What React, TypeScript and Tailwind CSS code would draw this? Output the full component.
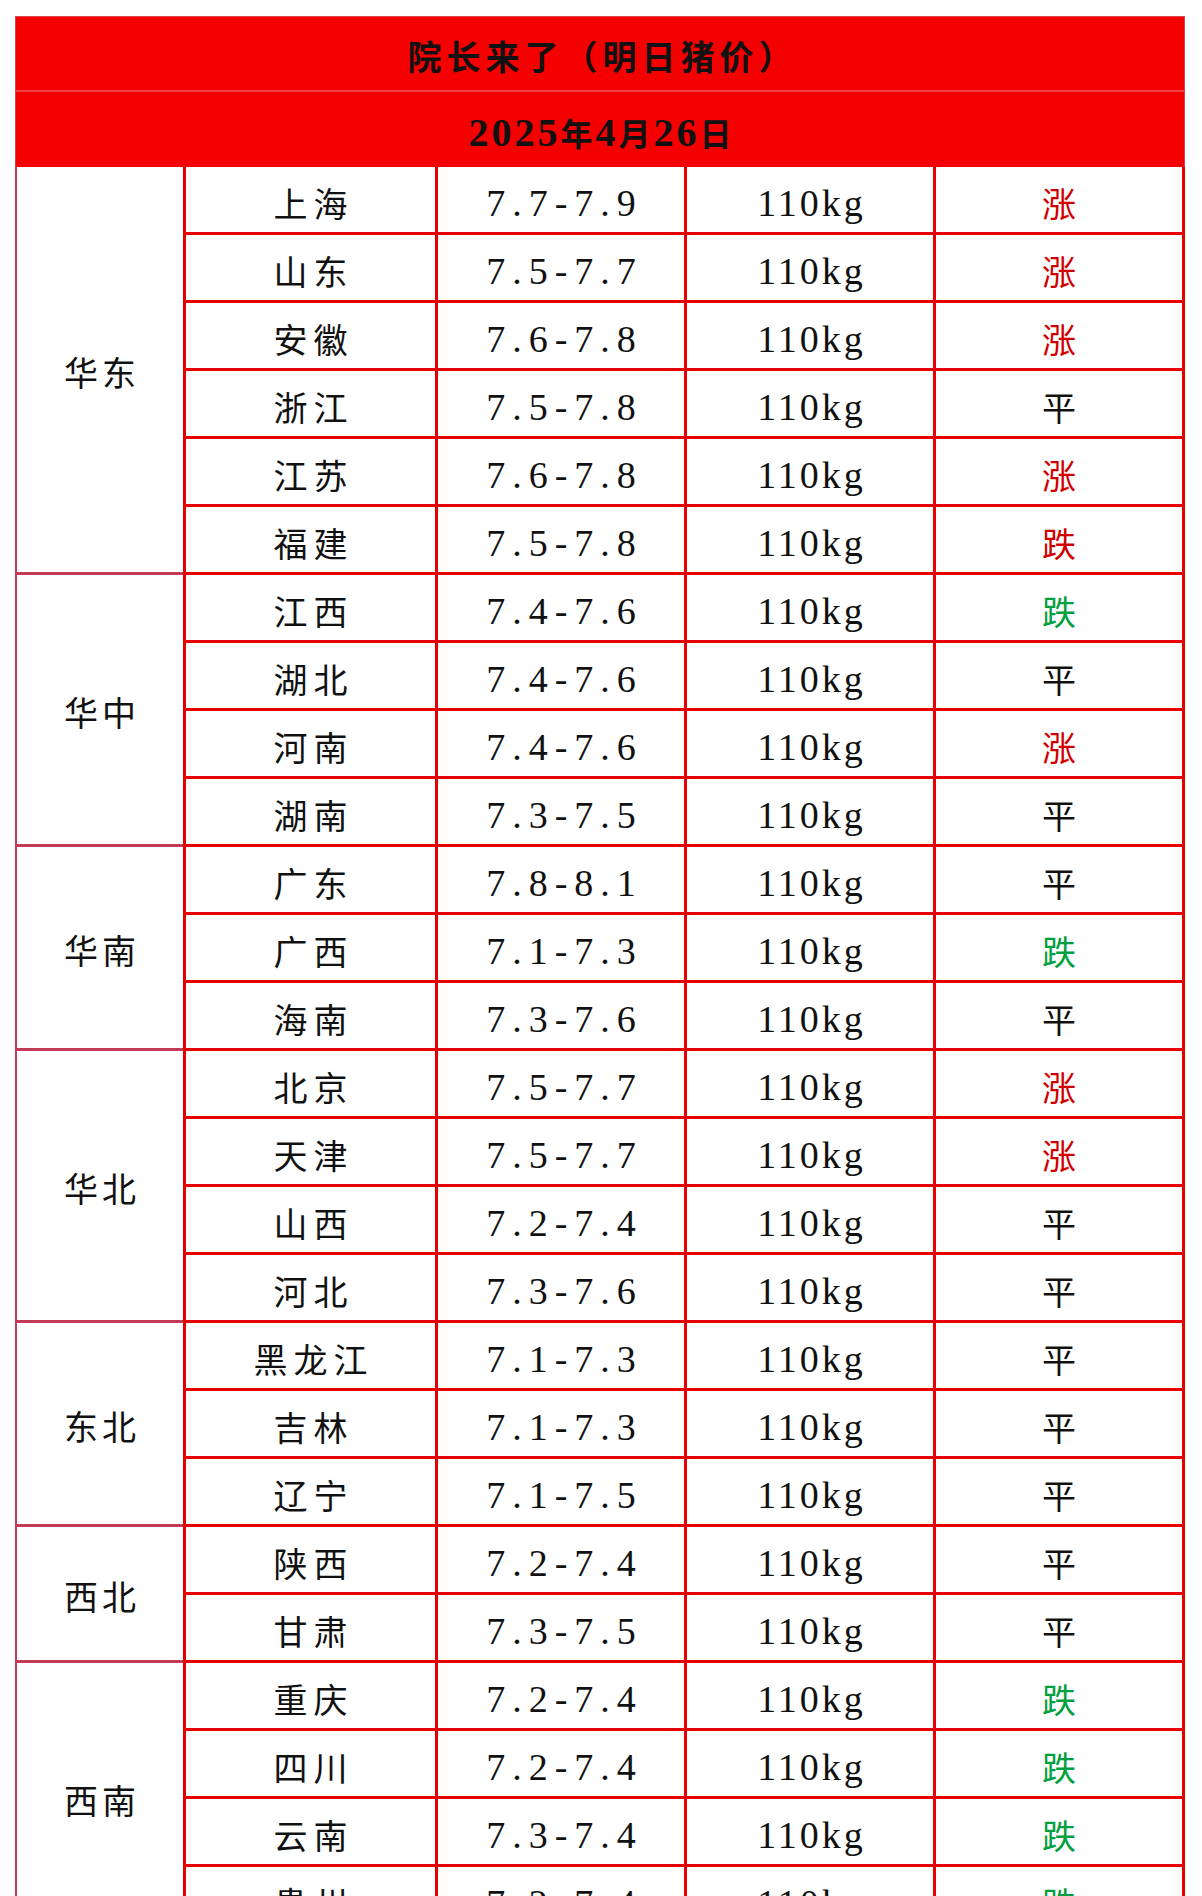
type Trend = 'up' | 'flat' | 'down' | 'downRed';

type Row = [string, string, Trend];

const regions: { name: string; rows: Row[] }[] = [
  {
    name: '华东',
    rows: [
      ['上海', '7.7-7.9', 'up'],
      ['山东', '7.5-7.7', 'up'],
      ['安徽', '7.6-7.8', 'up'],
      ['浙江', '7.5-7.8', 'flat'],
      ['江苏', '7.6-7.8', 'up'],
      ['福建', '7.5-7.8', 'downRed'],
    ],
  },
  {
    name: '华中',
    rows: [
      ['江西', '7.4-7.6', 'down'],
      ['湖北', '7.4-7.6', 'flat'],
      ['河南', '7.4-7.6', 'up'],
      ['湖南', '7.3-7.5', 'flat'],
    ],
  },
  {
    name: '华南',
    rows: [
      ['广东', '7.8-8.1', 'flat'],
      ['广西', '7.1-7.3', 'down'],
      ['海南', '7.3-7.6', 'flat'],
    ],
  },
  {
    name: '华北',
    rows: [
      ['北京', '7.5-7.7', 'up'],
      ['天津', '7.5-7.7', 'up'],
      ['山西', '7.2-7.4', 'flat'],
      ['河北', '7.3-7.6', 'flat'],
    ],
  },
  {
    name: '东北',
    rows: [
      ['黑龙江', '7.1-7.3', 'flat'],
      ['吉林', '7.1-7.3', 'flat'],
      ['辽宁', '7.1-7.5', 'flat'],
    ],
  },
  {
    name: '西北',
    rows: [
      ['陕西', '7.2-7.4', 'flat'],
      ['甘肃', '7.3-7.5', 'flat'],
    ],
  },
  {
    name: '西南',
    rows: [
      ['重庆', '7.2-7.4', 'down'],
      ['四川', '7.2-7.4', 'down'],
      ['云南', '7.3-7.4', 'down'],
      ['贵州', '7.2-7.4', 'down'],
    ],
  },
];

const trendText: Record<Trend, string> = { up: '涨', flat: '平', down: '跌', downRed: '跌' };
const trendColor: Record<Trend, string> = {
  up: 'text-[#d10000]',
  flat: 'text-[#111111]',
  down: 'text-[#00a040]',
  downRed: 'text-[#d10000]',
};

const cjk = "font-['Noto_Sans_CJK_SC',sans-serif]";
const serif = "font-['Liberation_Serif','Noto_Sans_CJK_SC',serif]";

function DataRow({ row }: { row: Row }) {
  const [city, price, trend] = row;
  return (
    <div className="grid grid-cols-4 h-[68px] border-b-[3px] border-[#e60000] text-[#111111]">
      <div className={`flex items-center justify-center pt-[7px] pl-[6px] text-[34px] leading-none tracking-[6px] ${cjk}`}>
        {city}
      </div>
      <div className={`flex items-center justify-center border-l-[3px] border-[#e60000] pt-[7px] pl-[7px] text-[38px] leading-none tracking-[7px] ${serif}`}>
        {price}
      </div>
      <div className={`flex items-center justify-center border-l-[3px] border-[#e60000] pt-[7px] pl-[3px] text-[38px] leading-none tracking-[3px] ${serif}`}>
        110kg
      </div>
      <div className={`flex items-center justify-center border-l-[3px] border-[#e60000] pt-[7px] text-[34px] leading-none ${cjk} ${trendColor[trend]}`}>
        {trendText[trend]}
      </div>
    </div>
  );
}

export default function App() {
  return (
    <div className="min-h-screen bg-white pt-[16px] pl-[15px]">
      <div className="w-[1170px]">
        <div className="h-[76px] bg-[#f40000] border-t border-x border-[#d8404f] border-b-2 border-b-[#f2404f] flex items-center justify-center pt-[4px]">
          <span className={`text-[34px] font-bold leading-none tracking-[5px] pl-[5px] text-[#111111] ${cjk}`}>
            院长来了（明日猪价）
          </span>
        </div>
        <div className="h-[75px] bg-[#f40000] border-x border-[#d8404f] flex items-center justify-center pt-[6px] text-[#111111]">
          <span className="flex items-baseline font-bold leading-none tracking-[3px] pl-[3px]">
            <span className={`text-[40px] ${serif}`}>2025</span>
            <span className={`text-[32px] ${cjk}`}>年</span>
            <span className={`text-[40px] ${serif}`}>4</span>
            <span className={`text-[32px] ${cjk}`}>月</span>
            <span className={`text-[40px] ${serif}`}>26</span>
            <span className={`text-[32px] ${cjk}`}>日</span>
          </span>
        </div>
        {regions.map((r) => (
          <div key={r.name} className="flex">
            <div
              className={`w-[168px] shrink-0 border-l-2 border-b-[3px] border-[#c23a58] flex items-center justify-center pt-[4px] pl-[4px] text-[34px] leading-none tracking-[4px] text-[#111111] ${cjk}`}
            >
              {r.name}
            </div>
            <div className="flex-1 border-l-[3px] border-r-[3px] border-[#e60000]">
              {r.rows.map((row) => (
                <DataRow key={row[0]} row={row} />
              ))}
            </div>
          </div>
        ))}
      </div>
    </div>
  );
}
